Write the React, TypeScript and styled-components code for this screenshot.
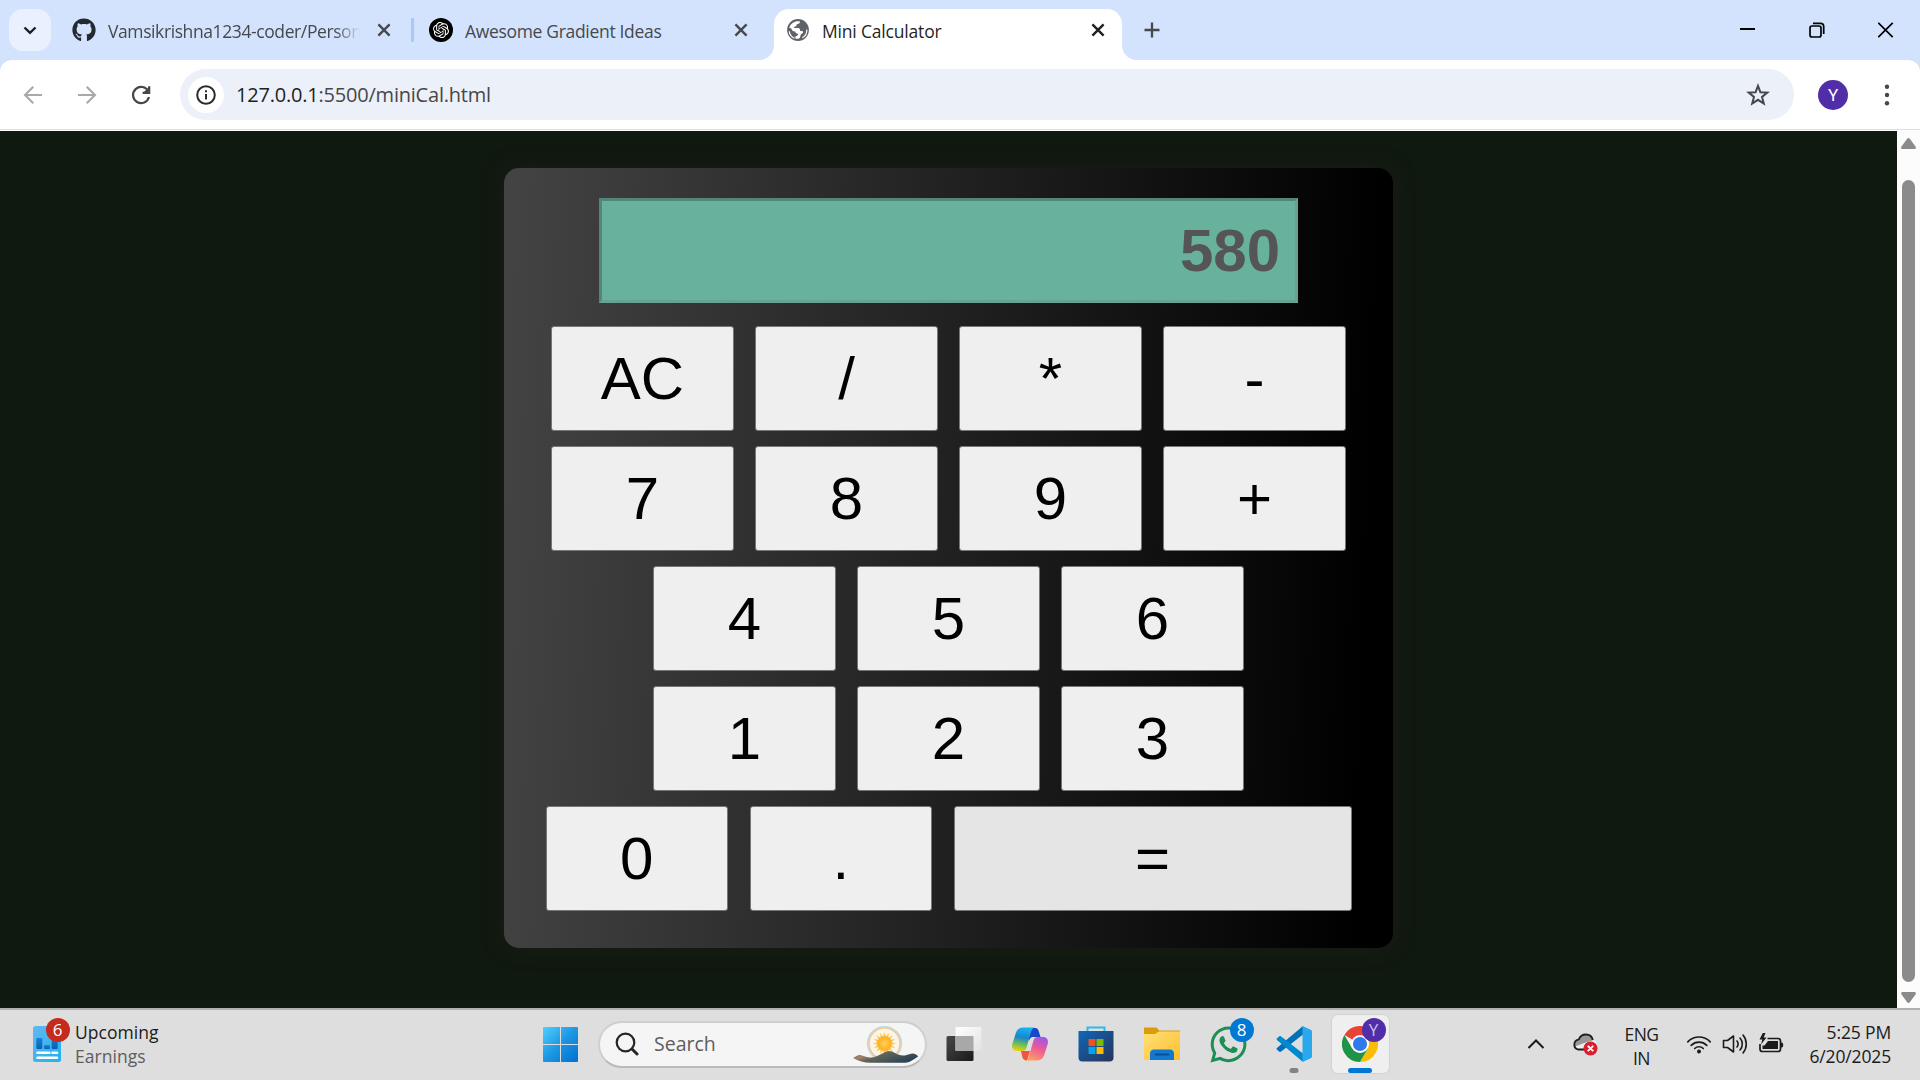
import React from "react";
import styled, { createGlobalStyle, css } from "styled-components";
import { SiOpenai } from "react-icons/si";
import { FaGithub, FaWhatsapp } from "react-icons/fa";

const Global = createGlobalStyle`
  * { box-sizing: border-box; }
  body { margin: 0; overflow: hidden; }
  svg { display: block; flex: none; }
`;

const uiFont = `"Open Sans", "Noto Sans", sans-serif`;

const Screen = styled.div`
  width: 1920px;
  height: 1080px;
  display: flex;
  flex-direction: column;
  overflow: hidden;
  font-family: ${uiFont};
`;

/* ---------- tab strip ---------- */

const TabStrip = styled.header`
  height: 60px;
  flex: none;
  display: flex;
  padding: 9px 0 0 9px;
  background: #d3e3fd;
`;

const TabSearch = styled.button`
  width: 42px;
  height: 42px;
  margin-right: 9px;
  padding: 0;
  border: 0;
  border-radius: 14px;
  background: #e9f1fe;
  display: grid;
  place-items: center;
`;

const TabItem = styled.div<{ $width: number; $inset: number; $end: number; $active?: boolean }>`
  width: ${(p) => p.$width}px;
  height: 51px;
  padding: 0 ${(p) => p.$end}px 9px ${(p) => p.$inset}px;
  display: flex;
  align-items: center;
  gap: 12px;
  color: #45494d;
  ${(p) =>
    p.$active &&
    css`
      position: relative;
      color: #1f1f1f;
      background: #fff;
      border-radius: 15px 15px 0 0;
      &::before,
      &::after {
        content: "";
        position: absolute;
        bottom: 0;
        width: 15px;
        height: 15px;
      }
      &::before {
        left: -15px;
        background: radial-gradient(circle at 0 0, transparent 14.5px, #fff 15.5px);
      }
      &::after {
        right: -15px;
        background: radial-gradient(circle at 100% 0, transparent 14.5px, #fff 15.5px);
      }
    `}
`;

const TabTitle = styled.span<{ $faded?: boolean; $track: number }>`
  flex: 1;
  min-width: 0;
  white-space: nowrap;
  font-size: 17.5px;
  line-height: 26px;
  padding-top: 2px;
  letter-spacing: ${(p) => p.$track}px;
  ${(p) => p.$faded && css`mask-image: linear-gradient(90deg, #000 90%, transparent 100%);`}
`;

const Separator = styled.div`
  width: 3px;
  height: 24px;
  margin-top: 9px;
  border-radius: 1px;
  background: #a8c7fa;
`;

const NewTab = styled.div`
  margin: 12px 0 0 21px;
`;

const WindowButtons = styled.div`
  margin-left: auto;
  width: 207px;
  height: 42px;
  padding-right: 1px;
  display: grid;
  grid-template-columns: repeat(3, 69px);
  place-items: center;
`;

/* ---------- toolbar ---------- */

const ToolbarBack = styled.div`
  flex: none;
  height: 71px;
  background: #d3e3fd;
`;

const Toolbar = styled.nav`
  height: 71px;
  display: flex;
  align-items: center;
  padding: 0 0 2px 20px;
  border-radius: 12px 12px 0 0;
  background: linear-gradient(#dfdfdf, #dfdfdf) 0 69px / 100% 1px no-repeat, #fff;
`;

const NavButtons = styled.div`
  display: flex;
  gap: 28px;
  width: 160px;
`;

const Omnibox = styled.div`
  width: 1614px;
  height: 51px;
  padding: 0 23px 0 8px;
  border-radius: 26px;
  background: #ecf0f9;
  display: flex;
  align-items: center;
`;

const SiteInfo = styled.div`
  width: 36px;
  height: 36px;
  border-radius: 50%;
  background: #fff;
  display: grid;
  place-items: center;
`;

const Url = styled.div`
  flex: 1;
  margin-left: 12px;
  font-size: 20px;
  line-height: 28px;
  letter-spacing: -0.21px;
  color: #474747;
  b {
    font-weight: 400;
    color: #1f1f1f;
  }
`;

const Avatar = styled.div`
  width: 30px;
  height: 30px;
  margin-left: 24px;
  border-radius: 50%;
  background: #512da8;
  color: #fff;
  font: 17px/31px Roboto, sans-serif;
  text-align: center;
`;

const Kebab = styled.div`
  margin-left: 36px;
`;

/* ---------- page ---------- */

const Viewport = styled.div`
  height: 877px;
  flex: none;
  display: flex;
`;

const PageBody = styled.main`
  width: 1897px;
  padding-top: 37px;
  background: #101910;
`;

const Calculator = styled.section`
  width: 889px;
  height: 780px;
  margin: 0 auto;
  padding-top: 30px;
  border-radius: 15px;
  background: linear-gradient(92deg, #434343 1%, #000 96%);
  box-shadow: 0 0 18px 2px #191c14;
  display: flex;
  flex-direction: column;
  align-items: center;
  gap: 15px;
`;

const Display = styled.output`
  width: 699px;
  height: 105px;
  margin-bottom: 8px;
  padding: 0 15px;
  border: 3px solid;
  border-color: #53867a #67a391 #67a391 #53867a;
  background: #68b29d;
  color: #555;
  font: bold 60px/99px "Liberation Sans", Arial, sans-serif;
  text-align: right;
`;

const KeyRow = styled.div`
  display: flex;
  gap: 21.5px;
`;

const Key = styled.button<{ $wide?: boolean }>`
  width: ${(p) => (p.$wide ? 398 : 182.5)}px;
  height: 105px;
  padding: 1px 0 0;
  border: 1px solid #767676;
  border-radius: 3px;
  background: ${(p) => (p.$wide ? "#e5e5e5" : "#efefef")};
  color: #000;
  font: 60px/1 "Liberation Sans", Arial, sans-serif;
`;

const ScrollTrack = styled.div`
  width: 23px;
  background: #fcfcfc;
  display: flex;
  flex-direction: column;
  align-items: center;
  padding: 7px 0 5px;
`;

const ScrollThumb = styled.div`
  width: 13px;
  height: 802px;
  margin: 31px 0 10px;
  border-radius: 7px;
  background: #8b8b8b;
`;

/* ---------- taskbar ---------- */

const Taskbar = styled.footer`
  height: 72px;
  flex: none;
  display: flex;
  align-items: center;
  padding-bottom: 2px;
  border-top: 2px solid #b1b0b1;
  background: #dedede;
  color: #1b1b1b;
`;

const Widget = styled.div`
  width: 543px;
  padding-left: 33px;
  display: flex;
  align-items: center;
  gap: 14px;
`;

const IconBox = styled.div`
  position: relative;
`;

const Badge = styled.span<{ $color: string; $left: number; $top: number; $text?: string }>`
  position: absolute;
  left: ${(p) => p.$left}px;
  top: ${(p) => p.$top}px;
  width: 24px;
  height: 24px;
  border-radius: 50%;
  background: ${(p) => p.$color};
  color: ${(p) => p.$text ?? "#fff"};
  font-size: 17px;
  line-height: 24px;
  text-align: center;
`;

const Lines = styled.div<{ $align?: string; $track?: number; $shift?: number; $width?: number }>`
  ${(p) => p.$width && css`width: ${p.$width}px;`}
  font-size: 17.5px;
  line-height: 24px;
  margin-top: ${(p) => p.$shift ?? 0}px;
  text-align: ${(p) => p.$align ?? "left"};
  letter-spacing: ${(p) => p.$track ?? 0}px;
  white-space: nowrap;
`;

const Muted = styled.div`
  color: #5d5d5d;
`;

const SearchPill = styled.div`
  width: 329px;
  height: 47px;
  margin: 0 4px 0 20px;
  padding: 0 6px 0 15px;
  border: 2px solid #cfcfcf;
  border-bottom-color: #b9b9b9;
  border-radius: 24px;
  background: #f5f5f5;
  display: flex;
  align-items: center;
`;

const SearchLabel = styled.span`
  flex: 1;
  margin-left: 15px;
  font-size: 19.5px;
  line-height: 26px;
  color: #5d5d5d;
`;

const App66 = styled.div<{ $focused?: boolean }>`
  position: relative;
  width: 57px;
  height: 58px;
  margin: 0 4.5px;
  border-radius: 6px;
  display: grid;
  place-items: center;
  ${(p) => p.$focused && css`background: #efefef; box-shadow: 0 0 0 1px #d3d3d3;`}
`;

const RunMark = styled.i<{ $active?: boolean }>`
  position: absolute;
  bottom: 0;
  left: 50%;
  width: ${(p) => (p.$active ? 24 : 9)}px;
  height: 5px;
  border-radius: 3px;
  transform: translateX(-50%);
  background: ${(p) => (p.$active ? "#0078d4" : "#838383")};
`;

const Tray = styled.div`
  margin-left: auto;
  padding-right: 29px;
  display: flex;
  align-items: center;
`;

const TraySlot = styled.div<{ $width: number }>`
  width: ${(p) => p.$width}px;
  display: flex;
  justify-content: center;
`;

/* ---------- icons ---------- */

const Cross = ({ color = "#45494d" }: { color?: string }) => (
  <svg width="24" height="24" viewBox="0 0 24 24" stroke={color} strokeWidth="2.4">
    <path d="M6.4 6.4 17.6 17.6M17.6 6.4 6.4 17.6" />
  </svg>
);

const Globe = () => (
  <svg width="24" height="24" viewBox="0 0 24 24">
    <circle cx="12" cy="12" r="10.9" fill="#5f6368" />
    <path
      d="M3.300 9.700C4.500 5.800 8 3.200 12 3.200c.8 0 1.400.1 2 .3-.1 1.700-.9 2.300-2.300 2.500-1.300.2-1.300 1.100-1.400 2.200-1.600 0-2.300.5-2.300 1.900h4.200c1.600.1 1.900 1.600 2 2.800h2c1.300.2 1.100 2.100-.1 2.700-1.300.6-1.600 1.500-1.800 2.900-.3 1.500-1.300 2.300-2.900 2.300-.8-.1-1.300-.2-2-.4v-2.200c2-.1 2.700-.9 2.700-2.500-1.800-.1-2.700-.7-2.800-2.300-2.300.1-3.400-.7-3.700-2.400-.4-.8-1.300-.7-2.300-.9Z"
      fill="#fff"
    />
    <path d="M3.200 13.200c.4 3.200 2.500 5.900 5.400 7" fill="none" stroke="#fff" strokeWidth="1.200" />
    <path d="M20.800 11.500c.2 3.500-1.600 6.800-4.500 8.300" fill="none" stroke="#fff" strokeWidth="1.200" />
  </svg>
);

const Arrow = ({ flip }: { flip?: boolean }) => (
  <svg width="26" height="26" viewBox="0 0 26 26" fill="none" stroke="#a9a9a9" strokeWidth="2.1" transform={flip ? "scale(-1 1)" : undefined}>
    <path d="M22 13H5.5M13.3 4.7 5 13l8.3 8.3" />
  </svg>
);

const Reload = () => (
  <svg width="26" height="26" viewBox="0 0 26 26" fill="none" stroke="#45484b" strokeWidth="2.2">
    <path d="M20.4 9.4A8.1 8.1 0 1 0 21 15" />
    <path d="M21.2 4.2v6.6h-6.6" />
    <path d="M21 5v5.6h-5.6z" fill="#45484b" stroke="none" />
  </svg>
);

const Info = () => (
  <svg width="22" height="22" viewBox="0 0 22 22" fill="none" stroke="#2b2b2b" strokeWidth="2">
    <circle cx="11" cy="11" r="8.8" />
    <path d="M11 10v5.6M11 6.2v2.1" />
  </svg>
);

const Star = () => (
  <svg width="26" height="26" viewBox="0 0 26 26" fill="none" stroke="#45484b" strokeWidth="2">
    <path d="m13 3.8 2.4 6.4 6.9.4-5.3 4.3 1.8 6.7-5.8-3.8-5.8 3.8L9 14.9l-5.3-4.3 6.9-.4z" />
  </svg>
);

const NewsIcon = () => (
  <svg width="28" height="36" viewBox="0 0 28 36">
    <defs>
      <linearGradient id="news" x1="0" y1="0" x2="1" y2="1">
        <stop stopColor="#62b8f3" />
        <stop offset="1" stopColor="#21b0ee" />
      </linearGradient>
      <linearGradient id="newsBar" x1="0" y1="0" x2="0" y2="1">
        <stop stopColor="#1683d8" />
        <stop offset="1" stopColor="#0c5fb0" />
      </linearGradient>
    </defs>
    <rect width="28" height="36" rx="2.5" fill="url(#news)" />
    <g fill="url(#newsBar)">
      <rect x="3.3" y="12" width="6" height="11" rx="1.2" />
      <rect x="11" y="19" width="6" height="4" rx="1.2" />
      <rect x="18.7" y="10" width="6" height="13" rx="1.2" />
    </g>
    <path d="M4.5 26.8h11.8M19.5 26.8H24M4.5 31.8H24" stroke="#fff" strokeWidth="2.6" strokeLinecap="round" />
  </svg>
);

const StartIcon = () => (
  <svg width="35" height="35" viewBox="0 0 35 35">
    <defs>
      <linearGradient id="start" x1="0" y1="0" x2="1" y2="1">
        <stop stopColor="#4fd0ff" />
        <stop offset=".5" stopColor="#1c96e3" />
        <stop offset="1" stopColor="#0070ce" />
      </linearGradient>
    </defs>
    <path d="M1 0h16v17H0V1a1 1 0 0 1 1-1ZM18 0h16a1 1 0 0 1 1 1v16H18ZM0 18h17v17H1a1 1 0 0 1-1-1ZM18 18h17v16a1 1 0 0 1-1 1H18Z" fill="url(#start)" />
  </svg>
);

const Magnifier = () => (
  <svg width="24" height="24" viewBox="0 0 24 24" fill="none" stroke="#262626" strokeLinecap="round">
    <circle cx="10.5" cy="10.5" r="8.8" strokeWidth="2.2" />
    <path d="m17 17 5 5" strokeWidth="3" />
  </svg>
);

const rays = Array.from({ length: 16 }, (_, i) => i * 22.5);

const SunArt = () => (
  <svg width="66" height="42" viewBox="0 0 66 42">
    <defs>
      <radialGradient id="sun">
        <stop stopColor="#ffcf5a" />
        <stop offset="1" stopColor="#ffad1f" />
      </radialGradient>
      <linearGradient id="hill" x1="0" y1="0" x2="1" y2=".5">
        <stop stopColor="#54504b" />
        <stop offset=".3" stopColor="#a5826c" />
        <stop offset=".5" stopColor="#5f6358" />
        <stop offset="1" stopColor="#2c4356" />
      </linearGradient>
    </defs>
    <circle cx="31.5" cy="20.5" r="16.800" fill="#faf5ea" stroke="#b9dbe2" strokeWidth="1.600" />
    <circle cx="31.5" cy="20.5" r="15.500" fill="none" stroke="#f9c795" strokeWidth="1.600" />
    {rays.map((a) => (
      <path key={a} d="m30.300 13.500 1.200-4.500 1.200 4.500z" fill="#ffc53d" transform={`rotate(${a} 31.5 20.5)`} />
    ))}
    <circle cx="31.5" cy="20.5" r="7.400" fill="url(#sun)" />
    <path d="M0 35c3-1 5-3.400 8-2.800 5 1 7 3 12 2 6-1 9-4 13-5.600 3-1.200 6-.6 9 1.400 3 1.800 6 3 10 2.400 4-.4 6-2.400 9-1.600 2.500.8 3.500 1.400 4 3-4 2-7 5.600-13 6H18c-7 0-13-2-18-4.800Z" fill="url(#hill)" />
  </svg>
);

const TaskView = () => (
  <svg width="36" height="36" viewBox="0 0 36 36">
    <defs>
      <linearGradient id="tvDark" x1="0" y1="0" x2="1" y2="1">
        <stop stopColor="#474747" />
        <stop offset="1" stopColor="#1a1a1a" />
      </linearGradient>
      <linearGradient id="tvLight" x1="0" y1="0" x2="1" y2="1">
        <stop stopColor="#fff" />
        <stop offset="1" stopColor="#e2e2e2" />
      </linearGradient>
    </defs>
    <rect x="0.500" y="10" width="27" height="25" rx="1.500" fill="url(#tvDark)" />
    <rect x="9.500" y="1" width="26" height="24" rx="1" fill="url(#tvLight)" />
    <path d="M9.500 10h17a1 1 0 0 1 1 1v14h-18z" fill="#a8a8a8" />
  </svg>
);

const Copilot = () => (
  <svg width="36" height="34" viewBox="0 0 36 34">
    <defs>
      <linearGradient id="cpA" x1=".4" y1="0" x2=".2" y2="1">
        <stop stopColor="#16b0f4" />
        <stop offset=".4" stopColor="#1a86c9" />
        <stop offset=".7" stopColor="#6fc054" />
        <stop offset="1" stopColor="#f5d30c" />
      </linearGradient>
      <linearGradient id="cpB" x1=".8" y1="0" x2=".4" y2="1">
        <stop stopColor="#9a55f2" />
        <stop offset=".5" stopColor="#ee5a94" />
        <stop offset="1" stopColor="#fd9b63" />
      </linearGradient>
    </defs>
    <path d="M17 1h6c2.500 0 3.300 1.400 4 4l1.500 5h-7c-3 0-3.800 2-4.500 4z" fill="#1748c9" />
    <path d="M9 24h9l-3 9.500c-2.600 0-4-1.200-4.700-3.500z" fill="#f0563b" />
    <path d="M11.500.5H23c-2.400.2-3.400 2.400-4.300 5.500l-4 14c-.9 3-2 4-4.500 4H5c-3.600 0-5.800-2.600-4.700-7L4 5.500C5.200 2 7.500.5 11.500.5Z" fill="url(#cpA)" />
    <path d="M24.500 33.500H13c2.400-.2 3.400-2.400 4.300-5.500l4-14c.9-3 2-4 4.500-4H31c3.600 0 5.800 2.600 4.700 7L32 28.500c-1.200 3.500-3.500 5-7.500 5Z" fill="url(#cpB)" />
  </svg>
);

const Store = () => (
  <svg width="36" height="36" viewBox="0 0 36 36">
    <defs>
      <linearGradient id="store" x1="0" y1="0" x2="1" y2="1">
        <stop stopColor="#0f68b7" />
        <stop offset="1" stopColor="#273358" />
      </linearGradient>
    </defs>
    <path d="M9.500 6.500V1.500h17v5" fill="none" stroke="#2cb9ef" strokeWidth="2" />
    <path d="M.5 5h35v26.500a4 4 0 0 1-4 4h-27a4 4 0 0 1-4-4z" fill="url(#store)" />
    <path d="M10.500 13h7v7h-7z" fill="#f25022" />
    <path d="M18.500 13h7v7h-7z" fill="#7fba00" />
    <path d="M10.500 21h7v7h-7z" fill="#00a4ef" />
    <path d="M18.500 21h7v7h-7z" fill="#ffb900" />
  </svg>
);

const Folder = () => (
  <svg width="36" height="34" viewBox="0 0 36 34">
    <defs>
      <linearGradient id="folder" x1="0" y1="0" x2="1" y2="1">
        <stop stopColor="#ffe07a" />
        <stop offset="1" stopColor="#fdbf2c" />
      </linearGradient>
    </defs>
    <path d="M0 1.500C0 .7.500.5 1.200.5h10.300c1 0 1.500.4 2.200 1.200L15.300 3.500H36V10H0z" fill="#dc9c09" />
    <path d="M0 7h10.500c2 0 3-2.500 5-2.500H36V33H0z" fill="url(#folder)" />
    <path d="M6 33V26a4 4 0 0 1 4-3.500h16a4 4 0 0 1 4 3.500v7z" fill="#1479cd" />
    <path d="M11.500 27.500h13" stroke="#0a4f96" strokeWidth="2" strokeLinecap="round" />
  </svg>
);

const VsCode = () => (
  <svg width="36" height="36" viewBox="0 0 36 36">
    <path d="M1 23.700 3 25.500c.8.6 1.500.5 2.200 0L27 8.500V0L1.200 21.700c-.8.700-.8 1.400-.2 2Z" fill="#0070b8" />
    <path d="M1 12.300 3 10.500c.8-.6 1.500-.5 2.200 0L27 27.500V36L1.200 14.300c-.8-.7-.8-1.400-.2-2Z" fill="#0089d1" />
    <path d="m26.500 0 8.300 3.700c.8.400 1.200 1 1.200 1.800v25c0 .8-.4 1.400-1.200 1.800L26.500 36z" fill="#29a8ee" />
  </svg>
);

const Chrome = () => (
  <svg width="36" height="36" viewBox="0 0 36 36">
    <path d="M18 18 2.400 9A18 18 0 0 1 33.600 9z" fill="#ea4335" />
    <path d="M33.600 9A18 18 0 0 1 18 36l7.800-13.500L26 9z" fill="#fbbc05" />
    <path d="M2.400 9A18 18 0 0 0 18 36l7.800-13.500L10.200 22.500z" fill="#1e9446" />
    <circle cx="18" cy="18" r="9" fill="#fff" />
    <circle cx="18" cy="18" r="7.100" fill="#3079ec" />
  </svg>
);

const Cloud = () => (
  <svg width="26" height="24" viewBox="0 0 26 24">
    <path d="M6.500 17.500a5 5 0 0 1 .3-9.900C8 4 11 2.500 14 2.500c3.500 0 6 2.200 6.800 5.500 2.500.3 4 2 4 4.700l-5 4.800z" fill="#efefef" />
    <path d="M3 14.500c5-1.500 12-5 17.500-6-1-3.500-3.500-5.500-7-5.500S8.500 5 7.500 8.500C4 8.800 1.500 11 3 14.500Z" fill="#999" />
    <path d="M12 17.500H6.500a5 5 0 0 1 .3-9.900C8 4 11 2.500 14 2.500c3.500 0 6 2.200 6.800 5.500" fill="none" stroke="#1f1f1f" strokeWidth="1.900" />
    <circle cx="18.500" cy="16.500" r="7" fill="#d9202c" />
    <path d="m15.800 13.800 5.400 5.400m0-5.400-5.400 5.400" stroke="#fff" strokeWidth="1.900" />
  </svg>
);

const Wifi = () => (
  <svg width="26" height="22" viewBox="0 0 26 22" fill="none" stroke="#1b1b1b" strokeWidth="1.700" strokeLinecap="round">
    <path d="M1.800 8.800a15.500 15.500 0 0 1 22.400 0M5.200 12.300a11 11 0 0 1 15.600 0M8.700 15.500a6.200 6.200 0 0 1 8.600 0" />
    <circle cx="13" cy="18.500" r="2" fill="#1b1b1b" stroke="none" />
  </svg>
);

const Speaker = () => (
  <svg width="26" height="24" viewBox="0 0 26 24" fill="none" stroke="#1b1b1b" strokeWidth="1.600" strokeLinecap="round" strokeLinejoin="round">
    <path d="M1.500 8.500h4L11.500 4v16l-6-4.500h-4z" />
    <path d="M15 9a5 5 0 0 1 0 6M18 6a9 9 0 0 1 0 12M21 3a14 14 0 0 1 0 18" />
  </svg>
);

const Battery = () => (
  <svg width="26" height="24" viewBox="0 0 26 24">
    <path d="M9.500 6.500H20a2.500 2.500 0 0 1 2.500 2.500v8a2.500 2.500 0 0 1-2.500 2.500H4.500A2.500 2.500 0 0 1 2 17v-5" fill="none" stroke="#1b1b1b" strokeWidth="1.700" />
    <path d="M10 9h10v8H4.500v-3.500h2z" fill="#1b1b1b" />
    <path d="M22.500 10.500h1.200c1 0 1.500 1 1.500 2.500s-.5 2.500-1.500 2.500h-1.200z" fill="#1b1b1b" />
    <path d="M4.800 1 1.500 7.500h2.800L3 12.500 8.500 5.500H5.700L7.500 1z" fill="#1b1b1b" />
  </svg>
);

const topRows = [
  ["AC", "/", "*", "-"],
  ["7", "8", "9", "+"],
  ["4", "5", "6"],
  ["1", "2", "3"],
];

export default function App() {
  return (
    <Screen>
      <Global />
      <TabStrip>
        <TabSearch>
          <svg width="16" height="16" viewBox="0 0 16 16" fill="none" stroke="#1f1f1f" strokeWidth="2.400">
            <path d="m2.500 5.500 5.500 5.300 5.500-5.300" />
          </svg>
        </TabSearch>
        <TabItem $width={351} $inset={12} $end={15}>
          <FaGithub size={24} color="#24292f" />
          <TabTitle $faded $track={-0.4}>Vamsikrishna1234-coder/Person</TabTitle>
          <Cross />
        </TabItem>
        <Separator />
        <TabItem $width={360} $inset={15} $end={21}>
          <svg width="24" height="24" viewBox="0 0 24 24">
            <circle cx="12" cy="12" r="12" fill="#000" />
            <SiOpenai x="4" y="4" size={16} color="#fff" />
          </svg>
          <TabTitle $track={-0.32}>Awesome Gradient Ideas</TabTitle>
          <Cross />
        </TabItem>
        <TabItem $width={348} $inset={12} $end={12} $active>
          <Globe />
          <TabTitle $track={-0.18}>Mini Calculator</TabTitle>
          <Cross color="#1f1f1f" />
        </TabItem>
        <NewTab>
          <svg width="18" height="18" viewBox="0 0 18 18" stroke="#45484b" strokeWidth="2.300">
            <path d="M9 1.500v15M1.500 9h15" />
          </svg>
        </NewTab>
        <WindowButtons>
          <svg width="16" height="16" viewBox="0 0 16 16" stroke="#000" strokeWidth="2">
            <path d="M0 7h15" />
          </svg>
          <svg width="16" height="16" viewBox="0 0 16 16" fill="none" stroke="#000" strokeWidth="1.700">
            <rect x="1" y="4" width="11" height="11" rx="2" />
            <path d="M4 1.300h7.500a3.200 3.200 0 0 1 3.200 3.200V12" />
          </svg>
          <svg width="16" height="16" viewBox="0 0 16 16" stroke="#000" strokeWidth="1.700">
            <path d="m.3.800 14.400 14.400m0-14.400L.3 15.200" />
          </svg>
        </WindowButtons>
      </TabStrip>
      <ToolbarBack>
        <Toolbar>
          <NavButtons>
            <Arrow />
            <Arrow flip />
            <Reload />
          </NavButtons>
          <Omnibox>
            <SiteInfo>
              <Info />
            </SiteInfo>
            <Url>
              <b>127.0.0.1</b>:5500/miniCal.html
            </Url>
            <Star />
          </Omnibox>
          <Avatar>Y</Avatar>
          <Kebab>
            <svg width="6" height="24" viewBox="0 0 6 24" fill="#45484b">
              <circle cx="3" cy="3.700" r="2.200" />
              <circle cx="3" cy="12" r="2.200" />
              <circle cx="3" cy="20.300" r="2.200" />
            </svg>
          </Kebab>
        </Toolbar>
      </ToolbarBack>
      <Viewport>
        <PageBody>
          <Calculator>
            <Display>580</Display>
            {topRows.map((row) => (
              <KeyRow key={row[0]}>
                {row.map((k) => (
                  <Key key={k}>{k}</Key>
                ))}
              </KeyRow>
            ))}
            <KeyRow>
              <Key>0</Key>
              <Key>.</Key>
              <Key $wide>=</Key>
            </KeyRow>
          </Calculator>
        </PageBody>
        <ScrollTrack>
          <svg width="15" height="11" viewBox="0 0 15 11" fill="#8b8b8b">
            <path d="M6 .9c.8-1.200 2.200-1.200 3 0l5.500 7.600c.8 1.200.3 2.500-1 2.500h-12C.2 11-.3 9.700.5 8.500z" />
          </svg>
          <ScrollThumb />
          <svg width="15" height="11" viewBox="0 0 15 11" fill="#8b8b8b">
            <path d="M6 10.100c.8 1.200 2.200 1.200 3 0l5.500-7.600c.8-1.200.3-2.500-1-2.500h-12C.2 0-.3 1.300.5 2.500z" />
          </svg>
        </ScrollTrack>
      </Viewport>
      <Taskbar>
        <Widget>
          <IconBox>
            <NewsIcon />
            <Badge $color="#c42b1c" $left={12.5} $top={-8}>6</Badge>
          </IconBox>
          <Lines $track={0.05}>
            Upcoming
            <Muted>Earnings</Muted>
          </Lines>
        </Widget>
        <StartIcon />
        <SearchPill>
          <Magnifier />
          <SearchLabel>Search</SearchLabel>
          <SunArt />
        </SearchPill>
        <App66><TaskView /></App66>
        <App66><Copilot /></App66>
        <App66><Store /></App66>
        <App66><Folder /></App66>
        <App66>
          <FaWhatsapp size={41} color="#1e8e57" />
          <Badge $color="#0078d4" $left={30} $top={3}>8</Badge>
        </App66>
        <App66>
          <VsCode />
          <RunMark />
        </App66>
        <App66 $focused>
          <Chrome />
          <Badge $color="#512da8" $text="#c9bfe6" $left={30} $top={3}>Y</Badge>
          <RunMark $active />
        </App66>
        <Tray>
          <TraySlot $width={42}>
            <svg width="18" height="12" viewBox="0 0 18 12" fill="none" stroke="#1b1b1b" strokeWidth="2">
              <path d="m1.500 10 7.500-7.500 7.500 7.500" />
            </svg>
          </TraySlot>
          <TraySlot $width={55}><Cloud /></TraySlot>
          <TraySlot $width={59}>
            <Lines $align="center" $track={-0.5} $shift={3}>
              ENG
              <div>IN</div>
            </Lines>
          </TraySlot>
          <TraySlot $width={56}><Wifi /></TraySlot>
          <TraySlot $width={16}><Speaker /></TraySlot>
          <TraySlot $width={56}><Battery /></TraySlot>
          <Lines $align="right" $track={-0.15} $width={92}>
            5:25 PM
            <div>6/20/2025</div>
          </Lines>
        </Tray>
      </Taskbar>
    </Screen>
  );
}
